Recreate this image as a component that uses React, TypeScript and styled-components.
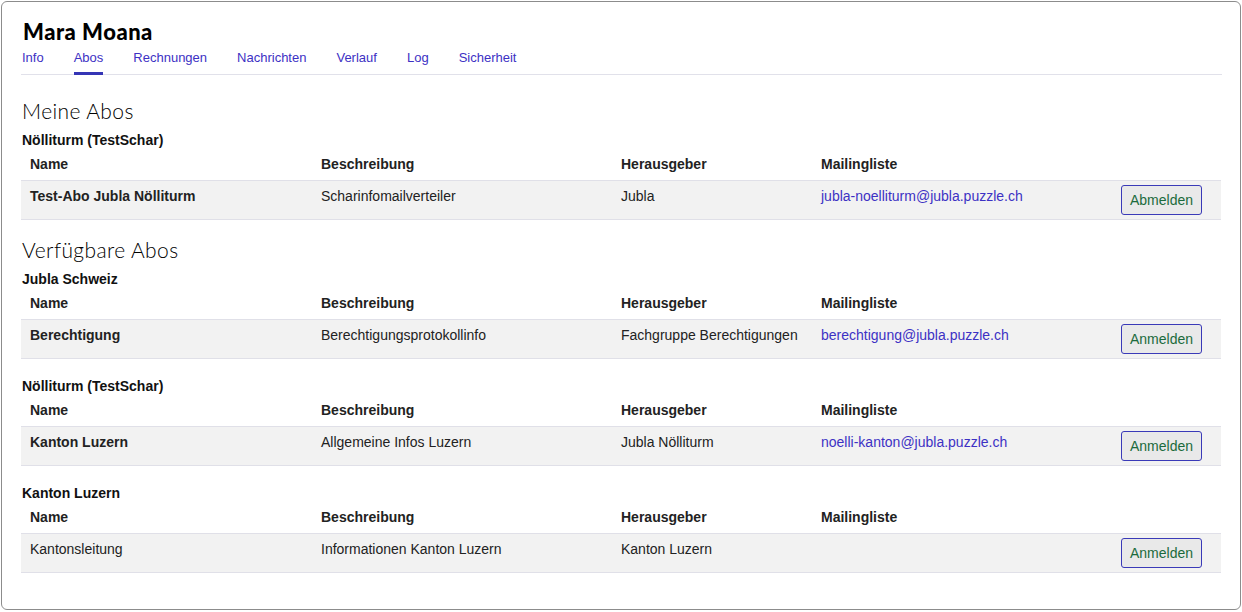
import React from 'react'
import styled, { createGlobalStyle } from 'styled-components'

const GlobalStyle = createGlobalStyle`
  body {
    margin: 1px;
    background: #fff;
    font-family: 'Liberation Sans', Arial, sans-serif;
    font-size: 14px;
    color: #222;
  }
`

type Abo = {
  name: string
  strong?: boolean
  description: string
  publisher: string
  mail?: string
  action: 'Abmelden' | 'Anmelden'
}

type Group = { title: string; abos: Abo[] }

const mine: Group[] = [
  {
    title: 'Nölliturm (TestSchar)',
    abos: [
      {
        name: 'Test-Abo Jubla Nölliturm',
        strong: true,
        description: 'Scharinfomailverteiler',
        publisher: 'Jubla',
        mail: 'jubla-noelliturm@jubla.puzzle.ch',
        action: 'Abmelden',
      },
    ],
  },
]

const available: Group[] = [
  {
    title: 'Jubla Schweiz',
    abos: [
      {
        name: 'Berechtigung',
        strong: true,
        description: 'Berechtigungsprotokollinfo',
        publisher: 'Fachgruppe Berechtigungen',
        mail: 'berechtigung@jubla.puzzle.ch',
        action: 'Anmelden',
      },
    ],
  },
  {
    title: 'Nölliturm (TestSchar)',
    abos: [
      {
        name: 'Kanton Luzern',
        strong: true,
        description: 'Allgemeine Infos Luzern',
        publisher: 'Jubla Nölliturm',
        mail: 'noelli-kanton@jubla.puzzle.ch',
        action: 'Anmelden',
      },
    ],
  },
  {
    title: 'Kanton Luzern',
    abos: [
      {
        name: 'Kantonsleitung',
        description: 'Informationen Kanton Luzern',
        publisher: 'Kanton Luzern',
        action: 'Anmelden',
      },
    ],
  },
]

const tabs = ['Info', 'Abos', 'Rechnungen', 'Nachrichten', 'Verlauf', 'Log', 'Sicherheit']

const App: React.FC = () => (
  <>
    <GlobalStyle />
    <Card>
      <Title>Mara Moana</Title>
      <Tabs>
        {tabs.map(tab => (
          <Tab key={tab} active={tab === 'Abos'}>
            {tab}
          </Tab>
        ))}
      </Tabs>

      <SectionTitle first>Meine Abos</SectionTitle>
      {mine.map((group, i) => (
        <AboGroup key={i} group={group} first />
      ))}

      <SectionTitle>Verfügbare Abos</SectionTitle>
      {available.map((group, i) => (
        <AboGroup key={i} group={group} first={i === 0} />
      ))}
    </Card>
  </>
)

export default App

const AboGroup: React.FC<{ group: Group; first?: boolean }> = ({ group, first }) => (
  <GroupBlock first={first}>
    <GroupTitle>{group.title}</GroupTitle>
    <Table>
      <colgroup>
        <col style={{ width: 291 }} />
        <col style={{ width: 300 }} />
        <col style={{ width: 200 }} />
        <col style={{ width: 299 }} />
        <col style={{ width: 110 }} />
      </colgroup>
      <thead>
        <tr>
          <Th>Name</Th>
          <Th>Beschreibung</Th>
          <Th>Herausgeber</Th>
          <Th>Mailingliste</Th>
          <Th />
        </tr>
      </thead>
      <tbody>
        {group.abos.map(abo => (
          <Row key={abo.name}>
            <Td strong={abo.strong}>{abo.name}</Td>
            <Td>{abo.description}</Td>
            <Td>{abo.publisher}</Td>
            <Td>{abo.mail && <MailLink href="#">{abo.mail}</MailLink>}</Td>
            <ActionCell>
              <ActionButton>{abo.action}</ActionButton>
            </ActionCell>
          </Row>
        ))}
      </tbody>
    </Table>
  </GroupBlock>
)

const Card = styled.div`
  box-sizing: border-box;
  width: 1240px;
  min-height: 609px;
  border: 1px solid #8c8c8c;
  border-radius: 6px;
  padding: 17px 18px 34px 19px;
`

const Title = styled.h1`
  margin: 0 2px;
  font-family: 'Lato', 'Liberation Sans', sans-serif;
  font-weight: 900;
  font-size: 22px;
  line-height: 26px;
  letter-spacing: 0.5px;
  color: #000;
`

const Tabs = styled.nav`
  display: flex;
  gap: 30px;
  margin-top: 0;
  padding-left: 1px;
  border-bottom: 1px solid #e1e1ea;
`

const Tab = styled.a<{ active?: boolean }>`
  display: block;
  padding: 5px 0 6px;
  font-size: 13px;
  line-height: 16px;
  color: #3d31c4;
  cursor: pointer;
  margin-bottom: -1px;
  border-bottom: 3px solid ${props => (props.active ? '#3535b5' : 'transparent')};
`

const SectionTitle = styled.h2<{ first?: boolean }>`
  margin: ${props => (props.first ? '24px' : '18px')} 1px 0;
  font-family: 'Lato', 'Liberation Sans', sans-serif;
  font-weight: 300;
  font-size: 21px;
  line-height: 24px;
  letter-spacing: 0.4px;
  color: #000;
`

const GroupBlock = styled.div<{ first?: boolean }>`
  margin-top: ${props => (props.first ? '9px' : '19px')};
`

const GroupTitle = styled.div`
  padding-left: 1px;
  font-weight: bold;
  font-size: 14px;
  line-height: 16px;
  color: #111;
`

const Table = styled.table`
  width: 1200px;
  table-layout: fixed;
  border-collapse: collapse;
`

const Th = styled.th`
  padding: 8px 9px;
  text-align: left;
  font-weight: bold;
  font-size: 14px;
  line-height: 16px;
  color: #222;
`

const Row = styled.tr`
  background: #f2f2f2;
  border-top: 1px solid #e0e0e8;
  border-bottom: 1px solid #e0e0e8;
`

const Td = styled.td<{ strong?: boolean }>`
  padding: 7px 9px;
  vertical-align: top;
  font-size: 14px;
  line-height: 16px;
  font-weight: ${props => (props.strong ? 'bold' : 'normal')};
  color: #222;
`

const MailLink = styled.a`
  color: #3d31c4;
  text-decoration: none;
`

const ActionCell = styled.td`
  padding: 4px 19px 4px 0;
  text-align: right;
  vertical-align: top;
`

const ActionButton = styled.button`
  box-sizing: border-box;
  width: 81px;
  height: 30px;
  border: 1px solid #3a3ab8;
  border-radius: 3px;
  background: #e9e9e9;
  font-family: 'Liberation Sans', Arial, sans-serif;
  font-size: 14px;
  color: #1b6b3c;
  cursor: pointer;
`
